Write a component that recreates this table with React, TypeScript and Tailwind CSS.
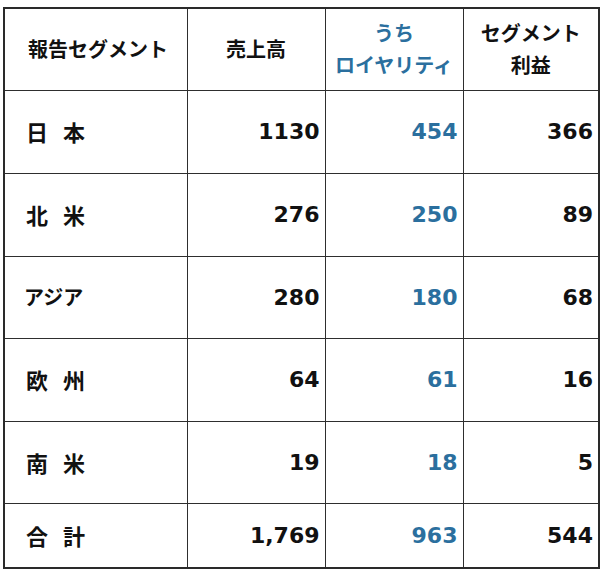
import React from 'react';

type Row = {
  name: string;
  sales: string;
  royalty: string;
  profit: string;
  h: string;
  kana?: boolean;
};

const rows: Row[] = [
  { name: '日 本', sales: '1130', royalty: '454', profit: '366', h: 'h-[83px]' },
  { name: '北 米', sales: '276', royalty: '250', profit: '89', h: 'h-[83px]' },
  { name: 'アジア', sales: '280', royalty: '180', profit: '68', h: 'h-[82px]', kana: true },
  { name: '欧 州', sales: '64', royalty: '61', profit: '16', h: 'h-[83px]' },
  { name: '南 米', sales: '19', royalty: '18', profit: '5', h: 'h-[82px]' },
  { name: '合 計', sales: '1,769', royalty: '963', profit: '544', h: 'h-[65px]' },
];

const jp = "font-['Noto_Sans_CJK_JP',sans-serif] font-bold text-[20px]";
const jpBody = "font-['Noto_Sans_CJK_JP',sans-serif] font-bold";
const num = "font-['DejaVu_Sans','Noto_Sans_CJK_JP',sans-serif] font-bold text-[22px] text-right pr-[5px]";
const cell = 'border border-[#2e2e2e] p-0 align-middle';

const App: React.FC = () => {
  return (
    <div className="w-[600px] h-[572px] bg-white pt-[7px] pl-[3px] text-[#111]">
      <table className="w-[595px] table-fixed border-collapse border-2 border-[#2a2a2a]">
        <colgroup>
          <col className="w-[183px]" />
          <col className="w-[138px]" />
          <col className="w-[138px]" />
          <col className="w-[136px]" />
        </colgroup>
        <thead>
          <tr className="h-[82px]">
            <th className={`${cell} ${jp} text-left pl-[23px]`}>報告セグメント</th>
            <th className={`${cell} ${jp} text-center`}>売上高</th>
            <th className={`${cell} ${jp} text-center leading-[32px] text-[#2b6f9e]`}>
              うち
              <br />
              ロイヤリティ
            </th>
            <th className={`${cell} ${jp} text-center leading-[32px]`}>
              セグメント
              <br />
              利益
            </th>
          </tr>
        </thead>
        <tbody>
          {rows.map((r) => (
            <tr key={r.name} className={r.h}>
              <td
                className={`${cell} ${jpBody} [word-spacing:10px] ${
                  r.kana ? 'text-[20px] pl-[19px]' : 'text-[22px] pl-[21px]'
                }`}
              >
                {r.name}
              </td>
              <td className={`${cell} ${num}`}>{r.sales}</td>
              <td className={`${cell} ${num} text-[#2b6f9e]`}>{r.royalty}</td>
              <td className={`${cell} ${num} pr-[4px]`}>{r.profit}</td>
            </tr>
          ))}
        </tbody>
      </table>
    </div>
  );
};

export default App;
